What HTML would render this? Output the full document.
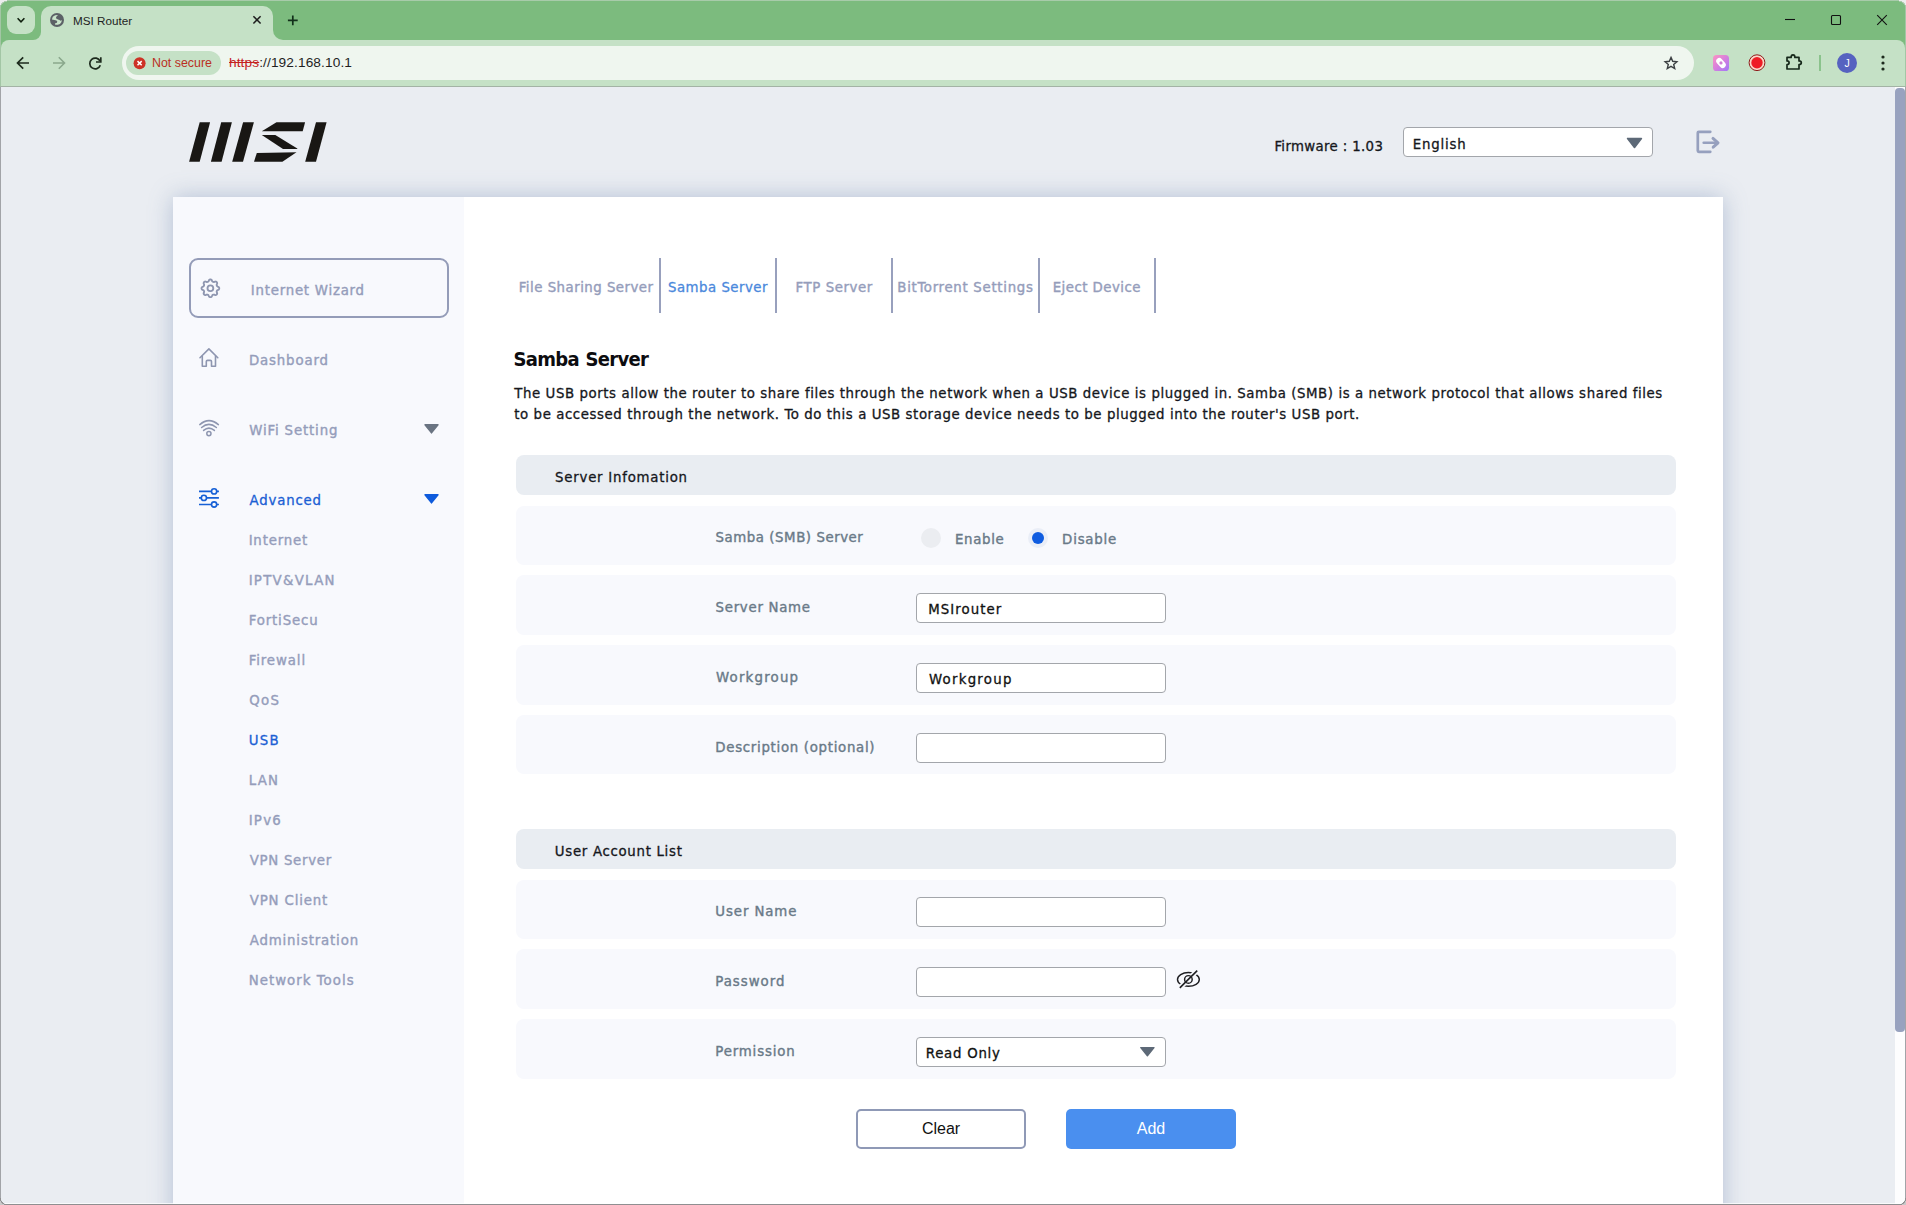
<!DOCTYPE html>
<html lang="en">
<head>
<meta charset="utf-8">
<title>MSI Router</title>
<style>
*{box-sizing:border-box;margin:0;padding:0}
html,body{width:1906px;height:1205px;overflow:hidden;background:#7cbb7e}
body{position:relative;font-family:"Liberation Sans",sans-serif;color:#1a1a1a}
div,span,i,b{position:absolute;display:block}
svg{position:absolute;overflow:visible}
/* ---------- browser chrome ---------- */
#toolbar{left:1px;top:40px;width:1904px;height:46px;background:#c5e1c6;border-radius:8px 8px 0 0}
#tbline{left:0;top:86px;width:1906px;height:1px;background:#a3b3a5}
#tabsearch{left:7px;top:6px;width:28px;height:28px;border-radius:9px;background:#c5e1c6}
#tab{left:41px;top:6px;width:232px;height:36px;border-radius:10px 10px 0 0;background:#c5e1c6}
.flare{top:30px;width:10px;height:10px;background:#c5e1c6}
.flare i{left:0;top:0;width:10px;height:10px;background:#7cbb7e}
#tabtitle{left:73px;top:14px;font-size:11.7px;line-height:14px;color:#1f1f1f;letter-spacing:0;white-space:nowrap}
#omni{left:122px;top:46px;width:1572px;height:34px;border-radius:17px;background:#eff6ef}
#chip{left:126px;top:51px;width:95px;height:24px;border-radius:12px;background:#c5e1c6}
#chiptext{left:152px;top:56px;font-size:12.4px;line-height:14px;color:#ba3023;white-space:nowrap}
#url{left:229px;top:55px;letter-spacing:.1px;font-size:13.7px;line-height:16px;color:#1f1f1f;white-space:nowrap}
#url s{position:static;display:inline;color:#c5221f}
/* ---------- page ---------- */
#page{left:1px;top:87px;width:1894px;height:1117px;background:#eaedf2;overflow:hidden}
#sbar{left:1895px;top:87px;width:10px;height:1117px;background:#fdfdfe}
#sthumb{left:0px;top:1px;width:10px;height:944px;border-radius:4px;background:#98a2bf}
.nt{font-family:"DejaVu Sans Condensed","DejaVu Sans","Liberation Sans",sans-serif;font-stretch:condensed;-webkit-text-stroke:.3px currentColor}

/*PC0*/
#pg{left:-1px;top:-87px;width:1906px;height:1205px}
#logo{left:0;top:0;width:340px;height:170px}
#logo i{left:0;top:0;width:340px;height:170px;background:#191714}
.t{font-size:14.8px;line-height:20px;white-space:nowrap}
.sg{color:#959dbb;-webkit-text-stroke-width:.4px}
.act{color:#4a88dc}
.lb{color:#6a7a88;-webkit-text-stroke-width:.4px}
.box{background:#fff;border:1px solid #a3a6ab;border-radius:4px}
#card{left:173px;top:197px;width:1550px;height:1100px;background:#fff;box-shadow:0 0 22px rgba(105,130,175,.42)}
#side{left:173px;top:197px;width:291px;height:1100px;background:#f8f9fd}
#main{left:464px;top:197px;width:1259px;height:1100px;background:#fff}
#wiz{left:189px;top:258px;width:260px;height:60px;border:2px solid #949cb8;border-radius:9px;background:#f8f9fd}
.tsep{top:258px;width:2px;height:55px;background:#98a0bd}
#h1{font-size:20px;font-weight:bold;-webkit-text-stroke:0;letter-spacing:-.7px;word-spacing:1px;line-height:28px;color:#0c0c0f;white-space:nowrap}
#para{font-size:14.8px;letter-spacing:.58px;line-height:21px;color:#15171c;white-space:nowrap}
.hd{left:516px;width:1160px;height:40px;border-radius:8px;background:#e9edf2}
.row{left:516px;width:1160px;height:59.5px;border-radius:8px;background:#f8f9fd}
.rad{width:20px;height:20px;border-radius:50%;background:#ebedf1}
.rad i{left:4px;top:4px;width:12px;height:12px;border-radius:50%;background:#0f5ce0}
.btn{top:1109px;width:170px;height:40px;border-radius:5px;font-family:"Liberation Sans",sans-serif;font-size:16px;line-height:36px;text-align:center}
#clear{left:856px;background:#fff;border:2px solid #8f99b6;color:#111}
#add{left:1066px;background:#4a8fef;color:#fff;line-height:40px}
/*PC1*/
/* window border */
#edgeT{left:0;top:0;width:1906px;height:1px;background:#a8cbaa}
#edgeL{left:0;top:0;width:1px;height:1205px;background:linear-gradient(#a3c6a5 0,#a3c6a5 86px,#a2a4a8 87px)}
#edgeR{left:1905px;top:0;width:1px;height:1205px;background:linear-gradient(#a3c6a5 0,#a3c6a5 86px,#a2a4a8 87px)}
#edgeB2{left:0;top:1203px;width:1906px;height:1px;background:rgba(255,255,255,.75)}
#edgeB{left:0;top:1204px;width:1906px;height:1px;background:#8f8f91}
.cor{width:7px;height:7px}
</style>
</head>
<body>
<div id="toolbar"></div>
<div id="tbline"></div>
<div id="tabsearch"></div>
<div id="tab"></div>
<div class="flare" style="left:33px;top:32px;width:8px;height:8px"><i style="border-radius:0 0 8px 0;width:8px;height:8px"></i></div>
<div class="flare" style="left:273px"><i style="border-radius:0 0 0 10px"></i></div>
<div id="tabtitle">MSI Router</div>
<div id="omni"></div>
<div id="chip"></div>
<div id="chiptext">Not secure</div>
<div id="url"><s>https</s>://192.168.10.1</div>
<!--CI0-->
<svg style="left:0;top:0" width="1906" height="90" viewBox="0 0 1906 90" fill="none" stroke-linecap="butt">
  <!-- tab search chevron -->
  <path d="M17.6 18.3 L21 21.8 L24.4 18.3" stroke="#10200f" stroke-width="1.6"/>
  <!-- favicon globe -->
  <circle cx="57" cy="20" r="7" fill="#5c6166"/>
  <path d="M51.9 19.4 L52.8 16.8 L55.2 15.2 L58 15.1 L56.3 16.7 L55.9 18.3 L58 19.5 L59.6 19.9 L60.3 20.8 L62 20.3 L61.2 22.5 L59.9 24.1 L57.8 24.8 L55.2 24.7 L54.9 23.6 L56.9 22.8 L57.3 21.6 L56.4 20.4 L54.4 20 Z" fill="#c9e4ca"/>
  <!-- tab close -->
  <path d="M253.4 16.3 L260.6 23.5 M260.6 16.3 L253.4 23.5" stroke="#1f1f1f" stroke-width="1.5"/>
  <!-- new tab -->
  <path d="M287.9 20.3 H297.7 M292.8 15.4 V25.2" stroke="#12301a" stroke-width="1.7"/>
  <!-- back -->
  <path d="M29 63 H18 M23.2 57.3 L17.5 63 L23.2 68.7" stroke="#1d2a1d" stroke-width="1.7"/>
  <!-- forward -->
  <path d="M53 63 H64 M58.8 57.3 L64.5 63 L58.8 68.7" stroke="#8aa88c" stroke-width="1.6"/>
  <!-- reload -->
  <path d="M100.1 61.2 A5.4 5.4 0 1 0 100.3 65.2" stroke="#1d2a1d" stroke-width="1.7"/>
  <path d="M100.8 57.2 V62 H96" stroke="#1d2a1d" stroke-width="1.7"/>
  <!-- not secure icon -->
  <circle cx="139.6" cy="63.2" r="6" fill="#cd3226"/>
  <path d="M137.5 61.1 L141.7 65.3 M141.7 61.1 L137.5 65.3" stroke="#fff" stroke-width="1.5"/>
  <!-- window controls -->
  <path d="M1785 19.5 H1795" stroke="#111" stroke-width="1.1"/>
  <rect x="1831.5" y="15.5" width="9" height="9" rx="1" stroke="#111" stroke-width="1.1"/>
  <path d="M1877.2 15.2 L1886.8 24.8 M1886.8 15.2 L1877.2 24.8" stroke="#111" stroke-width="1.1"/>
  <!-- star -->
  <path d="M1671 57.4 L1672.7 61.3 L1676.9 61.7 L1673.7 64.5 L1674.7 68.6 L1671 66.4 L1667.3 68.6 L1668.3 64.5 L1665.1 61.7 L1669.3 61.3 Z" stroke="#3c4043" stroke-width="1.4" stroke-linejoin="miter"/>
  <!-- pink extension -->
  <defs><linearGradient id="pg" x1="0" y1="0" x2="1" y2="1"><stop offset="0" stop-color="#fb95c2"/><stop offset=".5" stop-color="#d77fdd"/><stop offset="1" stop-color="#9f78f8"/></linearGradient></defs>
  <rect x="1713" y="55" width="16" height="16" rx="3.6" fill="url(#pg)"/>
  <path d="M1719.3 61.1 L1722.7 64.9" stroke="#fff" stroke-width="6.2" stroke-linecap="round"/>
  <circle cx="1721" cy="62.9" r="1.6" fill="#cf80d6"/>
  <!-- red record -->
  <circle cx="1757" cy="62.7" r="7.9" fill="#f9d8c9" stroke="#8e1c1c" stroke-width="1"/>
  <circle cx="1757" cy="62.7" r="5.7" fill="#ee1c25"/>
  <!-- puzzle -->
  <path d="M1787 57.4 H1791.1 C1791.1 55.8 1791.7 54.9 1793 54.9 C1794.3 54.9 1794.9 55.8 1794.9 57.4 H1799 V60.9 C1800.5 60.9 1801.3 61.6 1801.3 62.7 C1801.3 63.8 1800.5 64.5 1799 64.5 V69 H1787 V64.7 C1788.3 64.7 1789.1 63.9 1789.1 62.8 C1789.1 61.7 1788.3 60.9 1787 60.9 Z" stroke="#16281a" stroke-width="1.7" stroke-linejoin="round"/>
  <!-- separator -->
  <path d="M1820 55 V71" stroke="#7cbb7e" stroke-width="1.6"/>
  <!-- avatar -->
  <circle cx="1847" cy="63" r="10" fill="#5662c0"/>
  <!-- kebab -->
  <circle cx="1883" cy="57" r="1.6" fill="#1d2a1d"/><circle cx="1883" cy="63" r="1.6" fill="#1d2a1d"/><circle cx="1883" cy="69" r="1.6" fill="#1d2a1d"/>
  <text x="1847" y="66.8" text-anchor="middle" font-family="Liberation Sans, sans-serif" font-size="10.5" fill="#fff" stroke="none">J</text>
</svg>
<!--CI1-->

<div id="page">
<div id="pg">
<div id="logo" aria-label="MSI logo">
<i style="clip-path:polygon(199.7px 122.3px,210.1px 122.3px,199.7px 161.7px,189.1px 161.7px)"></i>
<i style="clip-path:polygon(221.2px 122.3px,231.9px 122.3px,221.6px 161.7px,210.9px 161.7px)"></i>
<i style="clip-path:polygon(243.1px 122.3px,253.9px 122.3px,243px 161.7px,232.2px 161.7px)"></i>
<i style="clip-path:polygon(276.5px 122.3px,305.1px 122.3px,302.7px 131.2px,261.8px 131.2px)"></i>
<i style="clip-path:polygon(261.8px 135px,275.3px 135px,297.3px 148.4px,297.3px 149.1px,283px 149.1px)"></i>
<i style="clip-path:polygon(256.8px 153px,296.5px 152.3px,282.4px 161.7px,254px 161.7px)"></i>
<i style="clip-path:polygon(316px 122.3px,326.6px 122.3px,316px 161.7px,305.2px 161.7px)"></i>
</div>
<div class="box" id="lang" style="left:1403px;top:127px;width:250px;height:30px"></div>
<svg style="left:1626px;top:137px" width="17" height="12" viewBox="0 0 17 12"><path d="M1.6 1.5 H15.4 L8.5 10.4 Z" fill="#5d6977" stroke="#5d6977" stroke-width="1.6" stroke-linejoin="round"/></svg>
<svg style="left:1696px;top:129px" width="25" height="26" viewBox="0 0 25 26" fill="none" stroke="#96a0be" stroke-linecap="round" stroke-linejoin="round"><path d="M14.3 2.8 H2.8 Q1.8 2.8 1.8 3.8 V21.8 Q1.8 22.8 2.8 22.8 H14.3" stroke-width="2.7"/><path d="M7.7 13.8 H21" stroke-width="2.6"/><path d="M17 9.4 L22 13.8 L17.2 18.2" stroke-width="3"/></svg>
<div id="card"></div><div id="side"></div><div id="main"></div>
<div id="wiz"></div>
<svg style="left:423px;top:423px" width="17" height="12" viewBox="0 0 17 12"><path d="M2 1.7 H15 L8.5 9.9 Z" fill="#6a7482" stroke="#6a7482" stroke-width="1.4" stroke-linejoin="round"/></svg>
<svg style="left:423px;top:493px" width="17" height="12" viewBox="0 0 17 12"><path d="M2 1.7 H15 L8.5 9.9 Z" fill="#0f5bdc" stroke="#0f5bdc" stroke-width="1.4" stroke-linejoin="round"/></svg>
<svg style="left:0;top:0" width="480" height="520" viewBox="0 0 480 520" fill="none" stroke="#8e96b0" stroke-width="1.6" stroke-linecap="round" stroke-linejoin="round">
<g stroke-width="1.85"><path d="M219.25 288.30 L219.22 287.95 L219.11 287.61 L218.93 287.29 L218.67 286.99 L218.15 286.76 L217.63 286.57 L217.34 286.34 L217.12 286.12 L216.95 285.88 L216.82 285.64 L216.74 285.38 L216.69 285.09 L216.69 284.78 L216.74 284.42 L216.97 283.91 L217.17 283.38 L217.15 282.98 L217.04 282.63 L216.88 282.31 L216.66 282.04 L216.39 281.82 L216.07 281.66 L215.72 281.55 L215.32 281.53 L214.79 281.73 L214.28 281.96 L213.92 282.01 L213.61 282.01 L213.32 281.96 L213.06 281.88 L212.82 281.75 L212.58 281.58 L212.36 281.36 L212.13 281.07 L211.94 280.55 L211.71 280.03 L211.41 279.77 L211.09 279.59 L210.75 279.48 L210.40 279.45 L210.05 279.48 L209.71 279.59 L209.39 279.77 L209.09 280.03 L208.86 280.55 L208.67 281.07 L208.44 281.36 L208.22 281.58 L207.98 281.75 L207.74 281.88 L207.48 281.96 L207.19 282.01 L206.88 282.01 L206.52 281.96 L206.01 281.73 L205.48 281.53 L205.08 281.55 L204.73 281.66 L204.41 281.82 L204.14 282.04 L203.92 282.31 L203.76 282.63 L203.65 282.98 L203.63 283.38 L203.83 283.91 L204.06 284.42 L204.11 284.78 L204.11 285.09 L204.06 285.38 L203.98 285.64 L203.85 285.88 L203.68 286.12 L203.46 286.34 L203.17 286.57 L202.65 286.76 L202.13 286.99 L201.87 287.29 L201.69 287.61 L201.58 287.95 L201.55 288.30 L201.58 288.65 L201.69 288.99 L201.87 289.31 L202.13 289.61 L202.65 289.84 L203.17 290.03 L203.46 290.26 L203.68 290.48 L203.85 290.72 L203.98 290.96 L204.06 291.22 L204.11 291.51 L204.11 291.82 L204.06 292.18 L203.83 292.69 L203.63 293.22 L203.65 293.62 L203.76 293.97 L203.92 294.29 L204.14 294.56 L204.41 294.78 L204.73 294.94 L205.08 295.05 L205.48 295.07 L206.01 294.87 L206.52 294.64 L206.88 294.59 L207.19 294.59 L207.48 294.64 L207.74 294.72 L207.98 294.85 L208.22 295.02 L208.44 295.24 L208.67 295.53 L208.86 296.05 L209.09 296.57 L209.39 296.83 L209.71 297.01 L210.05 297.12 L210.40 297.15 L210.75 297.12 L211.09 297.01 L211.41 296.83 L211.71 296.57 L211.94 296.05 L212.13 295.53 L212.36 295.24 L212.58 295.02 L212.82 294.85 L213.06 294.72 L213.32 294.64 L213.61 294.59 L213.92 294.59 L214.28 294.64 L214.79 294.87 L215.32 295.07 L215.72 295.05 L216.07 294.94 L216.39 294.78 L216.66 294.56 L216.88 294.29 L217.04 293.97 L217.15 293.62 L217.17 293.22 L216.97 292.69 L216.74 292.18 L216.69 291.82 L216.69 291.51 L216.74 291.22 L216.82 290.96 L216.95 290.72 L217.12 290.48 L217.34 290.26 L217.63 290.03 L218.15 289.84 L218.67 289.61 L218.93 289.31 L219.11 288.99 L219.22 288.65 Z"/><circle cx="210.4" cy="288.3" r="2.9"/></g>
<path d="M200 357.7 L208.9 348.9 L217.8 357.7"/>
<path d="M202.3 356.2 V366.2 H206.3 V361.6 Q206.3 360.4 207.5 360.4 H210.3 Q211.5 360.4 211.5 361.6 V366.2 H215.5 V356.2"/>
<g stroke-width="1.5">
<path d="M199.8 424.6 Q208.9 416.6 218.4 424.6"/>
<path d="M201.6 427.5 Q208.9 421.2 216.4 427.5"/>
<path d="M203.6 430.4 Q208.9 425.8 214.4 430.4"/>
<circle cx="208.9" cy="433.6" r="2.1"/>
</g>
<g stroke="#1660d6" stroke-width="1.6" stroke-linecap="butt">
<path d="M199 491.4 H211.5 M216.7 491.4 H218.9"/>
<path d="M199 497.9 H201.3 M206.5 497.9 H218.9"/>
<path d="M199 504.5 H211.5 M216.7 504.5 H218.9"/>
<circle cx="214.1" cy="491.4" r="2.6"/>
<circle cx="203.9" cy="497.9" r="2.6"/>
<circle cx="214.1" cy="504.5" r="2.6"/>
</g>
</svg>
<div class="tsep" style="left:659px"></div>
<div class="tsep" style="left:775px"></div>
<div class="tsep" style="left:891px"></div>
<div class="tsep" style="left:1038px"></div>
<div class="tsep" style="left:1154px"></div>
<div class="nt" id="h1" style="left:513.6px;top:345px">Samba Server</div>
<div class="nt" id="para" style="left:514.3px;top:382px">The USB ports allow the router to share files through the network when a USB device is plugged in. Samba (SMB) is a network protocol that allows shared files<br>to be accessed through the network. To do this a USB storage device needs to be plugged into the router's USB port.</div>
<div class="hd" style="top:455.0px"></div>
<div class="hd" style="top:829.0px"></div>
<div class="row" style="top:505.5px"></div>
<div class="row" style="top:575.3px"></div>
<div class="row" style="top:645.0px"></div>
<div class="row" style="top:714.8px"></div>
<div class="row" style="top:879.5px"></div>
<div class="row" style="top:949.3px"></div>
<div class="row" style="top:1019.2px"></div>
<div class="rad" style="left:921px;top:528px"></div>
<div class="rad" style="left:1028px;top:528px;background:#eaeef7"><i></i></div>
<div class="box" style="left:916px;top:593px;width:250px;height:30px"></div>
<div class="box" style="left:916px;top:663px;width:250px;height:30px"></div>
<div class="box" style="left:916px;top:733px;width:250px;height:30px"></div>
<div class="box" style="left:916px;top:897px;width:250px;height:30px"></div>
<div class="box" style="left:916px;top:967px;width:250px;height:30px"></div>
<div class="box" style="left:916px;top:1037px;width:250px;height:30px"></div>
<svg style="left:1139px;top:1046px" width="17" height="12" viewBox="0 0 17 12"><path d="M1.8 1.6 H15 L8.4 9.8 Z" fill="#5d6977" stroke="#5d6977" stroke-width="1.4" stroke-linejoin="round"/></svg>
<svg style="left:1168px;top:960px" width="40" height="40" viewBox="0 0 40 40" fill="none" stroke="#1f1f22" stroke-width="1.45" stroke-linecap="butt">
<ellipse cx="20.4" cy="19.4" rx="10.9" ry="6.9"/>
<path d="M12.2 27.6 L28.8 11" stroke="#f8f9fd" stroke-width="5"/>
<circle cx="20.4" cy="19.4" r="3.8"/>
<path d="M11.8 27.9 L29.2 10.6" stroke-width="1.6"/>
</svg>

<div class="nt t " id="t_fw" style="left:1274.43px;top:136.0px;letter-spacing:0.363px;color:#15171c">Firmware : 1.03</div>
<div class="nt t " id="t_lang" style="left:1412.73px;top:133.5px;letter-spacing:0.836px;color:#15171c">English</div>
<div class="nt t sg" id="t_wiz" style="left:250.84px;top:280.3px;letter-spacing:0.773px;">Internet Wizard</div>
<div class="nt t sg" id="t_dash" style="left:248.95px;top:350.2px;letter-spacing:0.844px;">Dashboard</div>
<div class="nt t sg" id="t_wifi" style="left:249.27px;top:420.2px;letter-spacing:0.859px;">WiFi Setting</div>
<div class="nt t dn" id="t_adv" style="left:249.57px;top:490.3px;letter-spacing:0.822px;color:#1b5fd4">Advanced</div>
<div class="nt t sg" id="t_sub0" style="left:248.63px;top:530.3px;letter-spacing:0.821px;">Internet</div>
<div class="nt t sg" id="t_sub1" style="left:248.63px;top:570.3px;letter-spacing:1.300px;">IPTV&amp;VLAN</div>
<div class="nt t sg" id="t_sub2" style="left:248.63px;top:610.3px;letter-spacing:0.875px;">FortiSecu</div>
<div class="nt t sg" id="t_sub3" style="left:248.63px;top:650.3px;letter-spacing:0.928px;">Firewall</div>
<div class="nt t sg" id="t_sub4" style="left:249.18px;top:690.3px;letter-spacing:1.300px;">QoS</div>
<div class="nt t dn" id="t_sub5" style="left:248.68px;top:730.3px;letter-spacing:1.300px;color:#1b5fd4">USB</div>
<div class="nt t sg" id="t_sub6" style="left:248.63px;top:770.3px;letter-spacing:1.300px;">LAN</div>
<div class="nt t sg" id="t_sub7" style="left:248.63px;top:810.3px;letter-spacing:1.300px;">IPv6</div>
<div class="nt t sg" id="t_sub8" style="left:249.73px;top:850.3px;letter-spacing:0.716px;">VPN Server</div>
<div class="nt t sg" id="t_sub9" style="left:249.73px;top:890.3px;letter-spacing:0.862px;">VPN Client</div>
<div class="nt t sg" id="t_sub10" style="left:249.73px;top:930.3px;letter-spacing:0.845px;">Administration</div>
<div class="nt t sg" id="t_sub11" style="left:248.63px;top:970.3px;letter-spacing:1.055px;">Network Tools</div>
<div class="nt t sg" id="t_tab0" style="left:518.80px;top:276.6px;letter-spacing:0.490px;">File Sharing Server</div>
<div class="nt t act" id="t_tab1" style="left:668.03px;top:276.6px;letter-spacing:0.491px;">Samba Server</div>
<div class="nt t sg" id="t_tab2" style="left:795.54px;top:276.6px;letter-spacing:0.585px;">FTP Server</div>
<div class="nt t sg" id="t_tab3" style="left:897.30px;top:276.6px;letter-spacing:0.708px;">BitTorrent Settings</div>
<div class="nt t sg" id="t_tab4" style="left:1052.72px;top:276.6px;letter-spacing:0.459px;">Eject Device</div>
<div class="nt t " id="t_hd1" style="left:555.09px;top:467.2px;letter-spacing:0.767px;color:#15171c">Server Infomation</div>
<div class="nt t " id="t_hd2" style="left:554.84px;top:841.2px;letter-spacing:0.704px;color:#15171c">User Account List</div>
<div class="nt t lb" id="t_lb0" style="left:715.59px;top:527.2px;letter-spacing:0.558px;">Samba (SMB) Server</div>
<div class="nt t lb" id="t_lb1" style="left:715.59px;top:597.0px;letter-spacing:0.725px;">Server Name</div>
<div class="nt t lb" id="t_lb2" style="left:716.09px;top:666.7px;letter-spacing:1.211px;">Workgroup</div>
<div class="nt t lb" id="t_lb3" style="left:715.29px;top:736.5px;letter-spacing:0.709px;">Description (optional)</div>
<div class="nt t lb" id="t_lb4" style="left:715.29px;top:901.2px;letter-spacing:0.914px;">User Name</div>
<div class="nt t lb" id="t_lb5" style="left:715.29px;top:971.0px;letter-spacing:0.999px;">Password</div>
<div class="nt t lb" id="t_lb6" style="left:715.29px;top:1040.9px;letter-spacing:0.859px;">Permission</div>
<div class="nt t lb" id="t_en" style="left:955.02px;top:529.3px;letter-spacing:0.680px;">Enable</div>
<div class="nt t lb" id="t_dis" style="left:1062.11px;top:529.3px;letter-spacing:0.792px;">Disable</div>
<div class="nt t " id="t_in1" style="left:928.27px;top:599.0px;letter-spacing:1.068px;color:#111">MSIrouter</div>
<div class="nt t " id="t_in2" style="left:928.91px;top:669.0px;letter-spacing:1.277px;color:#111">Workgroup</div>
<div class="nt t " id="t_ro" style="left:925.80px;top:1043.0px;letter-spacing:0.750px;color:#111">Read Only</div>
<div id="clear" class="btn">Clear</div>
<div id="add" class="btn">Add</div>
</div>
</div>
<div id="sbar"><div id="sthumb"></div></div>

<div id="edgeT"></div><div id="edgeL"></div><div id="edgeR"></div><div id="edgeB2"></div><div id="edgeB"></div>
<!--CO0--><div class="cor" style="left:0;top:0;background:radial-gradient(circle at 7px 8px,transparent 6px,#a3c6a5 6.2px,#a9c9ab 7px,#eceeee 7.4px)"></div>
<div class="cor" style="left:1899px;top:0;background:radial-gradient(circle at 0px 8px,transparent 6px,#a3c6a5 6.2px,#a9c9ab 7px,#eceeee 7.4px)"></div>
<div class="cor" style="left:0;top:1198px;background:radial-gradient(circle at 7px 0px,transparent 6px,#8f8f91 6.2px,#8f8f91 7px,#c9c9c9 7.4px)"></div>
<div class="cor" style="left:1899px;top:1198px;background:radial-gradient(circle at 0px 0px,transparent 6px,#8f8f91 6.2px,#8f8f91 7px,#c9c9c9 7.4px)"></div><!--CO1-->
</body>
</html>
